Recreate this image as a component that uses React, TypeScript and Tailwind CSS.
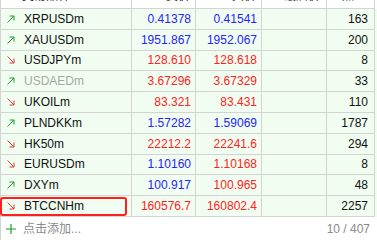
import React from 'react';

type Quote = {
    symbol: string;
    up: boolean;
    bid: string;
    ask: string;
    bidColor: string;
    askColor: string;
    spread: string;
    muted?: boolean;
    marked?: boolean;
};

const BLUE = "text-[#2424ff]";
const RED = "text-[#ff2424]";

// rows shown in the market watch list
const quotes: Quote[] = [
    { symbol: "XRPUSDm", up: true, bid: "0.41378", ask: "0.41541", bidColor: BLUE, askColor: BLUE, spread: "163" },
    { symbol: "XAUUSDm", up: true, bid: "1951.867", ask: "1952.067", bidColor: BLUE, askColor: BLUE, spread: "200" },
    { symbol: "USDJPYm", up: false, bid: "128.610", ask: "128.618", bidColor: RED, askColor: RED, spread: "8" },
    { symbol: "USDAEDm", up: true, bid: "3.67296", ask: "3.67329", bidColor: RED, askColor: RED, spread: "33", muted: true },
    { symbol: "UKOILm", up: false, bid: "83.321", ask: "83.431", bidColor: RED, askColor: RED, spread: "110" },
    { symbol: "PLNDKKm", up: true, bid: "1.57282", ask: "1.59069", bidColor: BLUE, askColor: BLUE, spread: "1787" },
    { symbol: "HK50m", up: false, bid: "22212.2", ask: "22241.6", bidColor: RED, askColor: RED, spread: "294" },
    { symbol: "EURUSDm", up: false, bid: "1.10160", ask: "1.10168", bidColor: BLUE, askColor: RED, spread: "8" },
    { symbol: "DXYm", up: true, bid: "100.917", ask: "100.965", bidColor: BLUE, askColor: RED, spread: "48" },
    { symbol: "BTCCNHm", up: false, bid: "160576.7", ask: "160802.4", bidColor: RED, askColor: RED, spread: "2257", marked: true },
];

const font = { fontFamily: '"Liberation Sans", "Noto Sans CJK SC", sans-serif' };

function Arrow({ up }: { up: boolean }) {
    const color = up ? "#1f9e2c" : "#e23a3a";
    return (
        <svg width="8" height="8" viewBox="0 0 8 8" className="shrink-0 ml-[1px]">
            {up ? (
                <path d="M0.5 7.5 L7 1 M2.5 1 H7 V5.5" fill="none" stroke={color} strokeWidth="1" />
            ) : (
                <path d="M0.5 0.5 L7 7 M2.5 7 H7 V2.5" fill="none" stroke={color} strokeWidth="1" />
            )}
        </svg>
    );
}

const cell = "h-[20.8px] border-r border-b border-[#d3d3d3] flex items-center";
const head = "h-[21px] border-r border-b border-[#d3d3d3] flex items-center pb-[4px]";

export default function App() {
    return (
        <div className="w-[377px] h-[240px] overflow-hidden bg-white text-[12px] text-[#111]" style={font}>
            <div className="border-l border-[#d3d3d3]">
                {/* header, mostly scrolled out of view */}
                <div className="grid grid-cols-[131px_64px_66px_65px_48px] -mt-[12px] bg-white text-[#222]">
                    <div className={`${head} pl-[21px]`}>交易品种</div>
                    <div className={`${head} justify-end pr-[5px]`}>卖价</div>
                    <div className={`${head} justify-end pr-[5px]`}>买价</div>
                    <div className={`${head} justify-end pr-[6px]`}>最后价</div>
                    <div className={`${head} justify-end pr-[8px]`}>点差</div>
                </div>
                {quotes.map((q) => (
                    <div key={q.symbol} className="grid grid-cols-[131px_64px_66px_65px_48px] bg-[#f0fdf0]">
                        <div className={`${cell} relative pl-[5px] gap-[9px]`}>
                            <Arrow up={q.up} />
                            <span className={q.muted ? "text-[#a8a8a8]" : "text-[#111]"}>{q.symbol}</span>
                            {q.marked && (
                                <span className="absolute left-[-1px] right-[4px] top-[1px] bottom-[0px] border-2 border-[#ff1f1f] rounded-[3px]" />
                            )}
                        </div>
                        <div className={`${cell} justify-end pr-[4px] ${q.bidColor}`}>{q.bid}</div>
                        <div className={`${cell} justify-end pr-[4px] ${q.askColor}`}>{q.ask}</div>
                        <div className={cell}></div>
                        <div className={`${cell} justify-end pr-[6px]`}>{q.spread}</div>
                    </div>
                ))}
                <div className="h-[24px] flex items-center justify-between pl-[5px] pr-[7px]">
                    <div className="flex items-center gap-[7px]">
                        <svg width="10" height="10" viewBox="0 0 10 10">
                            <path d="M5 0 V10 M0 5 H10" stroke="#1f9e2c" strokeWidth="1.2" />
                        </svg>
                        <span className="text-[#8a8a8a]">点击添加...</span>
                    </div>
                    <span className="text-[#8a8a8a]">10 / 407</span>
                </div>
            </div>
        </div>
    );
}
